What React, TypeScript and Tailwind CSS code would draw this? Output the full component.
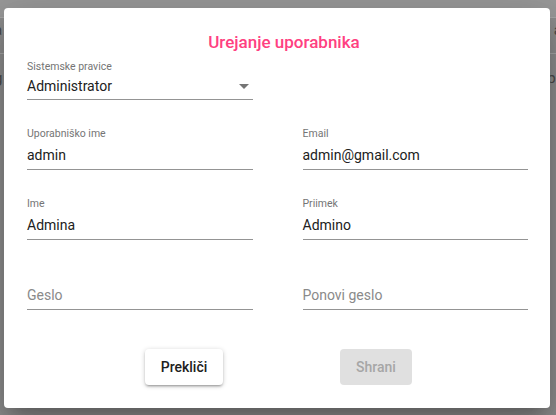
import React from "react"

function Field({ label, value, placeholder }: { label?: string; value?: string; placeholder?: string }) {
  return (
    <div className="flex flex-col">
      <div className="h-[14px] text-[10.5px] leading-[14px] text-[#757575]">{label}</div>
      <div className={`mt-[4px] h-[20px] text-[14px] leading-[20px] ${value ? "text-[#212121]" : "text-[#8a8a8a]"}`}>
        {value ?? placeholder}
      </div>
      <div className="mt-[4px] h-px bg-[#949494]" />
    </div>
  )
}

export default function App() {
  return (
    <div
      className="relative w-[556px] h-[415px] overflow-hidden bg-[#8e8e8e]"
      style={{ fontFamily: "Roboto, 'Noto Sans', sans-serif" }}
    >
      {/* page behind the backdrop */}
      <div className="absolute inset-0 flex flex-col text-[15px] leading-[20px] text-[#4a4a4a]">
        <div className="h-[17px] bg-[#999999]" />
        <div className="h-px bg-[#a8a8a8]" />
        <div className="h-[35px] pt-[2px] flex items-start justify-between">
          <span className="-ml-[6px]">a</span>
          <span className="-mr-[6px]">a</span>
        </div>
        <div className="h-px bg-[#a8a8a8]" />
        <div className="h-[48px] pt-[14px] flex items-start justify-between">
          <span className="-ml-[6px]">g</span>
          <span className="-mr-[8px]">bg</span>
        </div>
      </div>

      {/* dialog */}
      <div className="relative ml-[4px] mt-[8px] w-[546px] h-[400px] bg-white rounded-[4px] shadow-[0_11px_15px_-7px_rgba(0,0,0,0.2),0_24px_38px_3px_rgba(0,0,0,0.14),0_9px_46px_8px_rgba(0,0,0,0.12)] flex flex-col">
        <h2 className="pt-[22px] pl-[14px] h-[46px] text-center text-[17px] leading-[24px] font-medium text-[#ff4081]">
          Urejanje uporabnika
        </h2>

        <div className="mt-[6px] pl-[23px] pr-[22px] grid grid-cols-2 gap-x-[50px] gap-y-[27px]">
          {/* select */}
          <div className="flex flex-col">
            <div className="h-[14px] text-[10.5px] leading-[14px] text-[#757575]">Sistemske pravice</div>
            <div className="mt-[2px] h-[20px] flex items-center justify-between text-[14px] leading-[20px] text-[#212121]">
              <span>Administrator</span>
              <svg width="10" height="5" viewBox="0 0 10 5" className="mr-[4px] mt-[1px]">
                <path d="M0 0l5 5 5-5z" fill="#757575" />
              </svg>
            </div>
            <div className="mt-[3px] h-px bg-[#949494]" />
          </div>
          <div />

          <Field label="Uporabniško ime" value="admin" />
          <Field label="Email" value="admin@gmail.com" />
          <Field label="Ime" value="Admina" />
          <Field label="Priimek" value="Admino" />
          <Field placeholder="Geslo" />
          <Field placeholder="Ponovi geslo" />
        </div>

        <div className="mt-[39px] pl-[141px] flex gap-[117px]">
          <button className="w-[78px] h-[36px] rounded-[4px] bg-white text-[14px] font-medium text-[#212121] shadow-[0_1px_5px_0_rgba(0,0,0,0.2),0_2px_2px_0_rgba(0,0,0,0.14),0_3px_1px_-2px_rgba(0,0,0,0.12)]">
            Prekliči
          </button>
          <button className="w-[72px] h-[36px] rounded-[4px] bg-[#e0e0e0] text-[14px] font-medium text-[#a6a6a6]">
            Shrani
          </button>
        </div>
      </div>
    </div>
  )
}
